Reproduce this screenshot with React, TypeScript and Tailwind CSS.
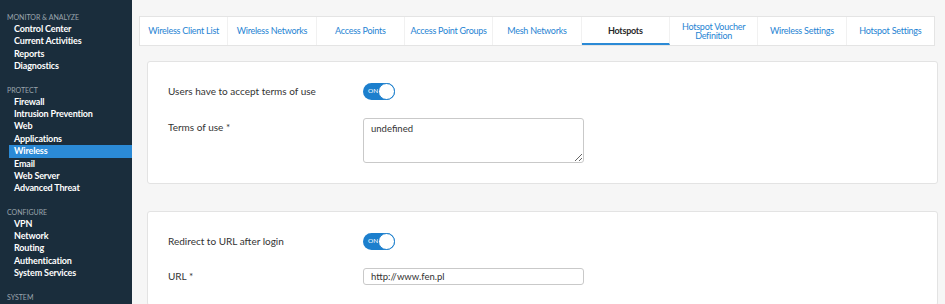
import React from "react";

const sections: { title: string; items: string[] }[] = [
  { title: "MONITOR & ANALYZE", items: ["Control Center", "Current Activities", "Reports", "Diagnostics"] },
  { title: "PROTECT", items: ["Firewall", "Intrusion Prevention", "Web", "Applications", "Wireless", "Email", "Web Server", "Advanced Threat"] },
  { title: "CONFIGURE", items: ["VPN", "Network", "Routing", "Authentication", "System Services"] },
  { title: "SYSTEM", items: [] },
];

const tabs: string[][] = [
  ["Wireless Client List"],
  ["Wireless Networks"],
  ["Access Points"],
  ["Access Point Groups"],
  ["Mesh Networks"],
  ["Hotspots"],
  ["Hotspot Voucher", "Definition"],
  ["Wireless Settings"],
  ["Hotspot Settings"],
];

function Toggle() {
  return (
    <div className="relative w-[32px] h-[17px] rounded-full bg-[#1c7fcd] flex items-center">
      <span className="pl-[5px] text-[6.5px] leading-none text-white">ON</span>
      <div className="absolute right-0 top-0 w-[17px] h-[17px] rounded-full bg-white border border-[#1c7fcd]" />
    </div>
  );
}

export default function App() {
  return (
    <div
      className="flex w-[945px] h-[304px] overflow-hidden"
      style={{ fontFamily: "Lato, 'Noto Sans', sans-serif" }}
    >
      <aside className="w-[132px] shrink-0 bg-[#1a2d3c] pt-[11px]">
        {sections.map((s, i) => (
          <div key={s.title} className={i === 0 ? "" : "mt-[11px]"}>
            <div className="pl-[7px] h-[12px] leading-[12px] text-[7px] text-[#9aa5ad]">
              {s.title}
            </div>
            {s.items.map((it) => (
              <div
                key={it}
                className={
                  "ml-[9px] pl-[5px] h-[12.4px] leading-[12.4px] text-[9px] font-bold tracking-[-0.15px] " +
                  (it === "Wireless" ? "bg-[#2b8ad6] text-white" : "text-white")
                }
              >
                {it}
              </div>
            ))}
          </div>
        ))}
      </aside>
      <main className="flex-1 bg-[#f6f6f6] pl-[7px] pr-[7px] pt-[16px]">
        <div className="mr-[3px] h-[30px] bg-white border border-[#e4e4e4] flex">
          {tabs.map((t) => {
            const active = t[0] === "Hotspots";
            return (
              <div
                key={t[0]}
                className={
                  "flex-1 basis-0 min-w-0 flex flex-col items-center justify-center text-center whitespace-nowrap text-[9px] leading-[9.5px] tracking-[-0.25px] border-r border-[#f1f1f1] last:border-r-0 " +
                  (active
                    ? "text-[#2a2a2a] font-bold border-b-[2px] border-b-[#2b8ad6] pt-[2px]"
                    : "text-[#1f84d3]")
                }
              >
                {t.map((line) => (
                  <span key={line}>{line}</span>
                ))}
              </div>
            );
          })}
        </div>
        <div className="ml-[8px] mt-[15px] bg-white border border-[#e3e3e3] rounded-[3px] pt-[21px] pb-[20px] pl-[20px]">
          <div className="flex items-start">
            <div className="w-[195px] text-[10px] text-[#333] pt-[1px]">Users have to accept terms of use</div>
            <Toggle />
          </div>
          <div className="flex items-start mt-[18px]">
            <div className="w-[195px] text-[10px] text-[#333] pt-[2px]">Terms of use *</div>
            <textarea
              readOnly
              defaultValue="undefined"
              className="w-[221px] h-[45px] border border-[#c9c9c9] rounded-[3px] px-[7px] py-[3px] text-[9.5px] text-[#333] outline-none"
              style={{ fontFamily: "Lato, sans-serif" }}
            />
          </div>
        </div>
        <div className="ml-[8px] mt-[27px] bg-white border border-[#e3e3e3] rounded-[3px] pt-[21px] pb-[20px] pl-[20px]">
          <div className="flex items-start">
            <div className="w-[195px] text-[10px] text-[#333] pt-[1px]">Redirect to URL after login</div>
            <Toggle />
          </div>
          <div className="flex items-center mt-[18px]">
            <div className="w-[195px] text-[10px] text-[#333]">URL *</div>
            <div className="w-[221px] h-[17px] border border-[#c9c9c9] rounded-[3px] px-[7px] text-[9.5px] leading-[15px] text-[#333]">
              http://www.fen.pl
            </div>
          </div>
        </div>
      </main>
    </div>
  );
}
